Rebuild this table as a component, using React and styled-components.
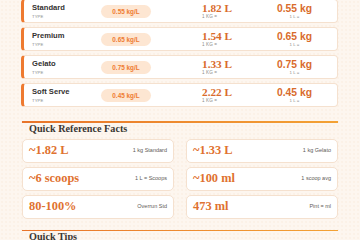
import React from "react";
import styled, { createGlobalStyle } from "styled-components";

const GlobalStyle = createGlobalStyle`
  html, body {
    margin: 0;
    padding: 0;
    overflow: hidden;
    background-color: #fdf6ef;
    background-image: radial-gradient(circle, #f8ebde 0.6px, transparent 0.8px);
    background-size: 4px 4px;
  }
  * { box-sizing: border-box; }
`;

const Page = styled.div`
  width: 360px;
  padding: 0 22px 0 21px;
  margin-top: -1px;
  font-family: "Liberation Sans", Arial, sans-serif;
`;

const ConvList = styled.div`
  display: flex;
  flex-direction: column;
  gap: 4px;
`;

const ConvCard = styled.div`
  height: 24px;
  background: #ffffff;
  border: 1px solid #f5e1cf;
  border-left: 3px solid #ee7a30;
  border-radius: 4px;
  padding-left: 8px;
  display: grid;
  grid-template-columns: 69px 101px 75px max-content;
  align-items: center;
`;

const NameBlock = styled.div`
  display: flex;
  flex-direction: column;
  gap: 1.5px;
`;

const Name = styled.div`
  font-weight: 700;
  font-size: 7.6px;
  line-height: 9px;
  color: #333130;
`;

const Tiny = styled.div`
  font-size: ${(p) => p.$size || 4.4}px;
  line-height: 5px;
  color: ${(p) => p.$color || "#8a8a8a"};
  letter-spacing: ${(p) => p.$ls || 0}px;
  text-transform: ${(p) => (p.$upper ? "uppercase" : "none")};
  text-align: ${(p) => p.$align || "left"};
`;

const Pill = styled.div`
  width: 50px;
  height: 13px;
  border-radius: 7px;
  background: #fde6d2;
  color: #ef7b31;
  font-weight: 700;
  font-size: 6.4px;
  display: flex;
  align-items: center;
  justify-content: center;
`;

const ValBlock = styled.div`
  display: flex;
  flex-direction: column;
  align-items: ${(p) => (p.$center ? "center" : "flex-start")};
  margin-bottom: 1px;
`;

const SerifVal = styled.div`
  font-family: "Liberation Serif", "Times New Roman", serif;
  font-weight: 700;
  font-size: ${(p) => p.$size || 11.3}px;
  line-height: 11px;
  color: ${(p) => p.$color || "#df7230"};
`;

const SansVal = styled.div`
  font-family: "Liberation Sans", Arial, sans-serif;
  font-weight: 700;
  font-size: 10.3px;
  line-height: 11px;
  color: #d96b2c;
`;

const Section = styled.section`
  margin-left: 1px;
  margin-top: ${(p) => p.$mt}px;
`;

const Rule = styled.div`
  height: 1.5px;
  background: linear-gradient(90deg, #e8742a, #f3a235);
`;

const SectionTitle = styled.h2`
  margin: 0;
  padding-left: 7px;
  font-family: "Liberation Serif", "Times New Roman", serif;
  font-weight: 700;
  font-size: 10.2px;
  line-height: 12px;
  color: #3a3633;
`;

const FactGrid = styled.div`
  margin-top: 4px;
  display: grid;
  grid-template-columns: 1fr 1fr;
  column-gap: 12px;
  row-gap: 4px;
`;

const FactCard = styled.div`
  height: 24px;
  background: #ffffff;
  border: 1px solid #f5e1cf;
  border-radius: 5px;
  padding: 0 6px;
  display: flex;
  align-items: center;
  justify-content: space-between;
`;

const conversions = [
  { name: "Standard", density: "0.55 kg/L", liters: "1.82 L", kg: "0.55 kg" },
  { name: "Premium", density: "0.65 kg/L", liters: "1.54 L", kg: "0.65 kg" },
  { name: "Gelato", density: "0.75 kg/L", liters: "1.33 L", kg: "0.75 kg" },
  { name: "Soft Serve", density: "0.45 kg/L", liters: "2.22 L", kg: "0.45 kg" },
];

const facts = [
  { value: "~1.82 L", label: "1 kg Standard" },
  { value: "~1.33 L", label: "1 kg Gelato" },
  { value: "~6 scoops", label: "1 L = Scoops" },
  { value: "~100 ml", label: "1 scoop avg" },
  { value: "80-100%", label: "Overrun Std" },
  { value: "473 ml", label: "Pint = ml" },
];

export default function App() {
  return (
    <>
      <GlobalStyle />
      <Page>
        <ConvList>
          {conversions.map((c) => (
            <ConvCard key={c.name}>
              <NameBlock>
                <Name>{c.name}</Name>
                <Tiny $size={4.2} $ls={0.1} $upper>
                  Type
                </Tiny>
              </NameBlock>
              <Pill>{c.density}</Pill>
              <ValBlock>
                <SerifVal $color="#d96b2c">{c.liters}</SerifVal>
                <Tiny $size={4.6} $ls={0.1}>1 KG =</Tiny>
              </ValBlock>
              <ValBlock $center>
                <SansVal>{c.kg}</SansVal>
                <Tiny $size={4.4}>1 L =</Tiny>
              </ValBlock>
            </ConvCard>
          ))}
        </ConvList>

        <Section $mt={14}>
          <Rule />
          <SectionTitle>Quick Reference Facts</SectionTitle>
          <FactGrid>
            {facts.map((f) => (
              <FactCard key={f.label}>
                <SerifVal $size={12.4}>{f.value}</SerifVal>
                <Tiny $size={5.5} $color="#5e5a57">{f.label}</Tiny>
              </FactCard>
            ))}
          </FactGrid>
        </Section>

        <Section $mt={11}>
          <Rule />
          <SectionTitle>Quick Tips</SectionTitle>
        </Section>
      </Page>
    </>
  );
}
